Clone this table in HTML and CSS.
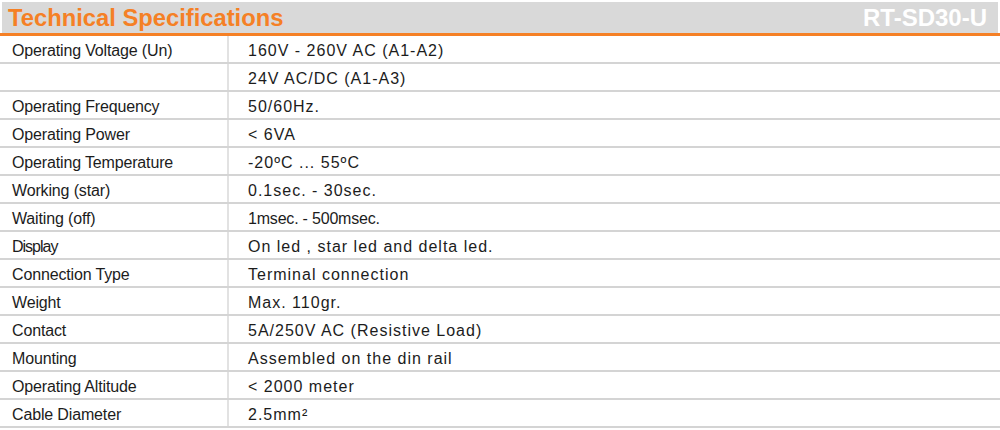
FILE: index.html
```html
<!DOCTYPE html>
<html>
<head>
<meta charset="utf-8">
<link rel="stylesheet" href="styles.css">
</head>
<body>
<div class="spec">
  <div class="head">
    <div class="bar">
      <h1 class="title">Technical Specifications</h1>
      <span class="model">RT-SD30-U</span>
    </div>
  </div>
  <div class="rows">
    <div class="row"><div class="k">Operating Voltage (Un)</div><div class="v">160V - 260V AC (A1-A2)</div></div>
    <div class="row"><div class="k"></div><div class="v">24V AC/DC (A1-A3)</div></div>
    <div class="row"><div class="k">Operating Frequency</div><div class="v">50/60Hz.</div></div>
    <div class="row"><div class="k">Operating Power</div><div class="v">&lt; 6VA</div></div>
    <div class="row"><div class="k">Operating Temperature</div><div class="v">-20ºC ... 55ºC</div></div>
    <div class="row"><div class="k">Working (star)</div><div class="v">0.1sec. - 30sec.</div></div>
    <div class="row"><div class="k">Waiting (off)</div><div class="v narrow">1msec. - 500msec.</div></div>
    <div class="row"><div class="k k-narrow">Display</div><div class="v">On led , star led and delta led.</div></div>
    <div class="row"><div class="k">Connection Type</div><div class="v">Terminal connection</div></div>
    <div class="row"><div class="k">Weight</div><div class="v">Max. 110gr.</div></div>
    <div class="row"><div class="k">Contact</div><div class="v">5A/250V AC (Resistive Load)</div></div>
    <div class="row"><div class="k">Mounting</div><div class="v">Assembled on the din rail</div></div>
    <div class="row"><div class="k">Operating Altitude</div><div class="v">&lt; 2000 meter</div></div>
    <div class="row"><div class="k">Cable Diameter</div><div class="v">2.5mm²</div></div>
  </div>
</div>
</body>
</html>
```
FILE: styles.css
```css
html, body {
  margin: 0;
  padding: 0;
  background: #ffffff;
}
body {
  font-family: "Liberation Sans", Arial, sans-serif;
  color: #1c1c1c;
}
.spec {
  width: 1000px;
}
.head {
  padding: 2px 2px 0 2px;
  border-bottom: 3px solid #f58025;
}
.bar {
  height: 31px;
  background: #d9d9d9;
  display: flex;
  align-items: center;
  justify-content: space-between;
  padding: 0 11px 0 6px;
}
.title {
  margin: 0;
  font-size: 23.75px;
  font-weight: bold;
  color: #f58025;
  line-height: 31px;
}
.model {
  font-size: 24px;
  font-weight: bold;
  color: #ffffff;
  line-height: 31px;
}
.row {
  display: flex;
  height: 26px;
  border-bottom: 2px solid #d4d4d4;
}
.k {
  width: 215px;
  padding: 2px 0 0 12px;
  border-right: 2px solid #e2e2e2;
  font-size: 16px;
  letter-spacing: -0.15px;
  line-height: 26px;
}
.k-narrow {
  letter-spacing: -1px;
}
.v {
  padding: 2px 0 0 19px;
  font-size: 16px;
  letter-spacing: 1px;
  line-height: 26px;
}
.v.narrow {
  letter-spacing: -0.2px;
}
```
